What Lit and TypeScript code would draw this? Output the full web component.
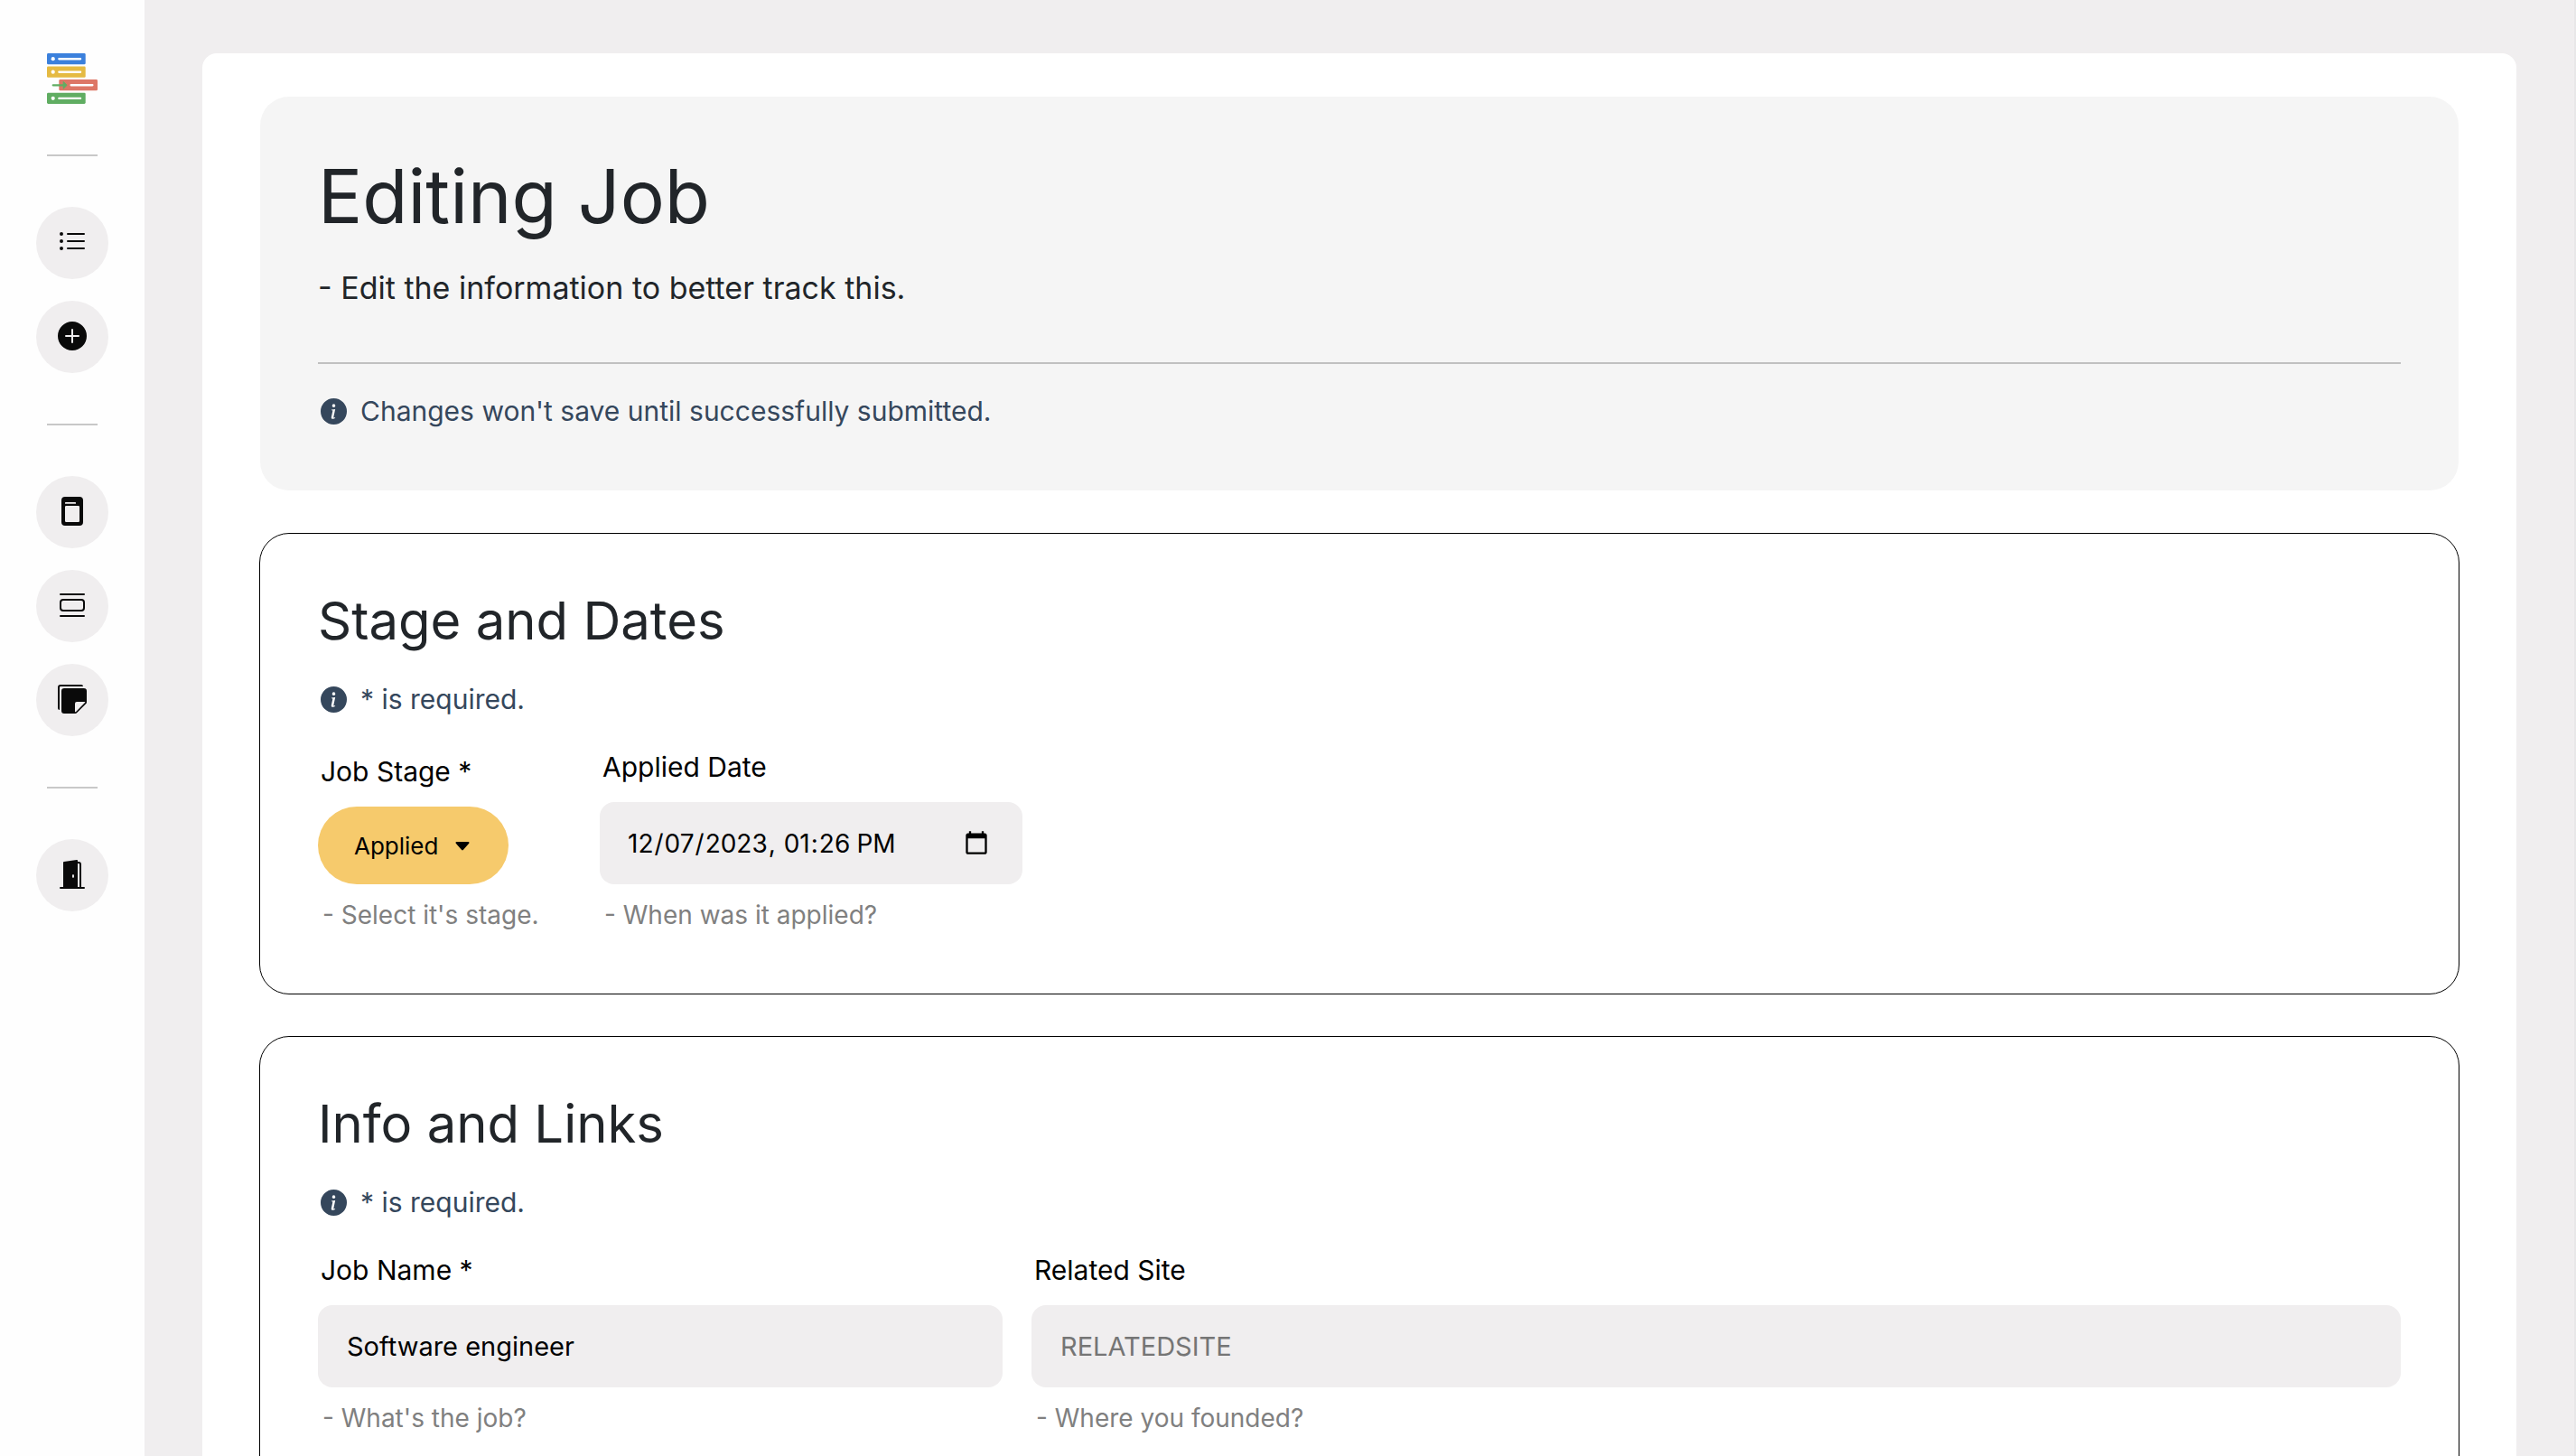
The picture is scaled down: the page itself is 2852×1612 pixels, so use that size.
import { LitElement, html, css, svg } from "lit";
import { customElement, property } from "lit/decorators.js";

const icons = {
  list: svg`<path fill-rule="evenodd" d="M5 11.5a.5.5 0 0 1 .5-.5h9a.5.5 0 0 1 0 1h-9a.5.5 0 0 1-.5-.5m0-4a.5.5 0 0 1 .5-.5h9a.5.5 0 0 1 0 1h-9a.5.5 0 0 1-.5-.5m0-4a.5.5 0 0 1 .5-.5h9a.5.5 0 0 1 0 1h-9a.5.5 0 0 1-.5-.5m-3 1a1 1 0 1 0 0-2 1 1 0 0 0 0 2m0 4a1 1 0 1 0 0-2 1 1 0 0 0 0 2m0 4a1 1 0 1 0 0-2 1 1 0 0 0 0 2"/>`,
  plus: svg`<path d="M16 8A8 8 0 1 1 0 8a8 8 0 0 1 16 0M8.5 4.5a.5.5 0 0 0-1 0v3h-3a.5.5 0 0 0 0 1h3v3a.5.5 0 0 0 1 0v-3h3a.5.5 0 0 0 0-1h-3z"/>`,
  page: svg`<path fill-rule="evenodd" d="M4 0h8a2 2 0 0 1 2 2v12a2 2 0 0 1-2 2H4a2 2 0 0 1-2-2V2a2 2 0 0 1 2-2M4.4 3a.4.4 0 0 0 0 .9h5.2a.4.4 0 0 0 0-.9zM4.6 5a.6.6 0 0 0-.6.6v7.8a.6.6 0 0 0 .6.6h6.8a.6.6 0 0 0 .6-.6V5.6a.6.6 0 0 0-.6-.6z"/>`,
  stack: svg`<path d="M3 4.5h10a2 2 0 0 1 2 2v3a2 2 0 0 1-2 2H3a2 2 0 0 1-2-2v-3a2 2 0 0 1 2-2m0 1a1 1 0 0 0-1 1v3a1 1 0 0 0 1 1h10a1 1 0 0 0 1-1v-3a1 1 0 0 0-1-1zM1 2a.5.5 0 0 1 .5-.5h13a.5.5 0 0 1 0 1h-13A.5.5 0 0 1 1 2m0 12a.5.5 0 0 1 .5-.5h13a.5.5 0 0 1 0 1h-13A.5.5 0 0 1 1 14"/>`,
  notes: svg`<path d="M0 1.5V13a1 1 0 0 0 1 1V1.5a.5.5 0 0 1 .5-.5H14a1 1 0 0 0-1-1H1.5A1.5 1.5 0 0 0 0 1.5"/><path d="M3.5 2A1.5 1.5 0 0 0 2 3.5v11A1.5 1.5 0 0 0 3.5 16h6.086a1.5 1.5 0 0 0 1.06-.44l4.915-4.914A1.5 1.5 0 0 0 16 9.586V3.5A1.5 1.5 0 0 0 14.5 2zm6 8.5a1 1 0 0 1 1-1h4.396a.25.25 0 0 1 .177.427l-5.146 5.146a.25.25 0 0 1-.427-.177z"/>`,
  door: svg`<path d="M1.5 15a.5.5 0 0 0 0 1h13a.5.5 0 0 0 0-1H13V2.5A1.5 1.5 0 0 0 11.5 1H11V.5a.5.5 0 0 0-.57-.495l-7 1A.5.5 0 0 0 3 1.5V15zM11 2h.5a.5.5 0 0 1 .5.5V15h-1zm-2.5 8c-.276 0-.5-.448-.5-1s.224-1 .5-1 .5.448.5 1-.224 1-.5 1"/>`,
  info: svg`<path d="M8 16A8 8 0 1 0 8 0a8 8 0 0 0 0 16m.93-9.412-1 4.705c-.07.34.029.533.304.533.194 0 .487-.07.686-.246l-.088.416c-.287.346-.92.598-1.465.598-.703 0-1.002-.422-.808-1.319l.738-3.468c.064-.293.006-.399-.287-.47l-.451-.081.082-.381 2.29-.287zM8 5.5a1 1 0 1 1 0-2 1 1 0 0 1 0 2"/>`,
};

type IconName = keyof typeof icons;

const navGroups: { icon: IconName; label: string }[][] = [
  [
    { icon: "list", label: "Job list" },
    { icon: "plus", label: "Add job" },
  ],
  [
    { icon: "page", label: "Pages" },
    { icon: "stack", label: "Stages" },
    { icon: "notes", label: "Notes" },
  ],
  [{ icon: "door", label: "Sign out" }],
];

@customElement("side-nav")
export class SideNav extends LitElement {
  static styles = css`
    :host {
      display: block;
      background: #fefefe;
    }
    nav {
      display: flex;
      flex-direction: column;
      align-items: center;
      gap: 56px;
      padding: 59px 40px;
    }
    .logo {
      display: block;
      height: 56px;
    }
    .logo svg {
      display: block;
      width: 56px;
      height: 56px;
    }
    .rule {
      width: 56px;
      height: 2px;
      margin: 0;
      border: 0;
      background: #c8c8c8;
    }
    .group {
      display: flex;
      flex-direction: column;
      gap: 24px;
    }
    button {
      display: flex;
      align-items: center;
      justify-content: center;
      width: 80px;
      height: 80px;
      padding: 0 0 2px;
      border: 0;
      border-radius: 50%;
      background: #f0eeef;
      color: #0a0a0a;
      cursor: pointer;
    }
    button svg {
      width: 32px;
      height: 32px;
      fill: currentColor;
    }
  `;

  private bar(x: number, y: number, color: string, dot: boolean) {
    return svg`
      <rect x=${x} y=${y} width="42.7" height="12.2" rx="1.4" fill=${color}/>
      ${dot ? svg`<circle cx=${x + 6.7} cy=${y + 6.1} r="2.1" fill="#fff"/>` : ""}
      <rect x=${x + 12.2} y=${y + 5} width="26" height="2.3" rx="1.1" fill="#fff"/>`;
  }

  render() {
    return html`
      <nav aria-label="Main">
        <a class="logo" href="#" aria-label="Home">
          <svg viewBox="0 0 56 56" aria-hidden="true">
            ${this.bar(0, 0.1, "#3b80dc", true)}
            ${this.bar(0, 14.6, "#e5ba42", true)}
            ${this.bar(13.3, 29.1, "#dd7766", false)}
            ${this.bar(0, 43.7, "#60ad62", true)}
            <path d="M6.7 35.3H19" stroke="#60ad62" stroke-width="2.2" stroke-linecap="round"/>
            <path d="M18.2 31.4v7.8l3.9-3.9z" fill="#60ad62" stroke="#60ad62" stroke-width="1" stroke-linejoin="round"/>
          </svg>
        </a>
        ${navGroups.map(
          (group) => html`
            <hr class="rule" />
            <div class="group">
              ${group.map(
                (item) => html`<button type="button" aria-label=${item.label}>
                  <svg viewBox="0 0 16 16" aria-hidden="true">${icons[item.icon]}</svg>
                </button>`
              )}
            </div>
          `
        )}
      </nav>
    `;
  }
}

@customElement("info-note")
export class InfoNote extends LitElement {
  @property() text = "";

  static styles = css`
    :host {
      display: flex;
      align-items: center;
      gap: 15px;
      padding: 8px 0 8px 3px;
      color: #35475c;
      font-size: 30px;
      line-height: 32px;
    }
    svg {
      flex: none;
      width: 29px;
      height: 29px;
      fill: currentColor;
    }
  `;

  render() {
    return html`<svg viewBox="0 0 16 16" aria-hidden="true">${icons.info}</svg><span>${this.text}</span>`;
  }
}

@customElement("app-root")
export class AppRoot extends LitElement {
  static styles = css`
    :host {
      display: grid;
      grid-template-columns: auto minmax(0, 1fr);
      box-sizing: border-box;
      height: 100vh;
      overflow: hidden;
      border-right: 2px solid #e8e7e8;
      background: #f0eeef;
      color: #000;
      font-family: Inter, "Open Sans", sans-serif;
    }
    * {
      box-sizing: border-box;
    }
    main {
      display: flex;
      flex-direction: column;
      gap: 48px;
      margin: 59px 64px 0;
      padding: 48px 64px;
      border-radius: 16px;
      background: #fff;
    }
    .intro,
    .card {
      padding: 64px;
      border-radius: 32px;
    }
    .intro {
      background: #f5f5f5;
    }
    .card {
      outline: 1px solid #000;
    }
    h1,
    h2,
    p {
      margin: 0;
      color: #212529;
      font-weight: 400;
    }
    h1 {
      font-size: 82px;
      line-height: 94px;
    }
    h2 {
      margin-bottom: 30px;
      font-size: 58px;
      line-height: 65px;
    }
    .lead {
      margin-top: 30px;
      font-size: 34px;
      line-height: 48px;
    }
    .line {
      height: 2px;
      margin: 58px 0 28px;
      border: 0;
      background: #c0c0c0;
    }
    .row {
      display: flex;
      align-items: flex-end;
      gap: 64px;
      margin-top: 32px;
    }
    .split {
      display: grid;
      grid-template-columns: 1fr 2fr;
      gap: 32px;
      margin-top: 32px;
    }
    .field {
      display: flex;
      flex-direction: column;
      align-items: flex-start;
      min-width: 248px;
    }
    label {
      margin-bottom: 20px;
      padding-left: 3px;
      font-size: 30px;
      line-height: 38px;
    }
    .hint {
      padding: 12px 0 0 5px;
      color: #808080;
      font-size: 28px;
      line-height: 45px;
    }
    input {
      width: 100%;
      height: 91px;
      padding: 0 32px;
      border: 0;
      border-radius: 16px;
      background: #f0eeef;
      color: #000;
      font: inherit;
      font-size: 29px;
    }
    input::placeholder {
      color: #757575;
      opacity: 1;
    }
    .date {
      width: 468px;
      padding: 0 34px 0 30px;
      font-size: 28px;
    }
    .date::-webkit-calendar-picker-indicator {
      width: 30px;
      height: 30px;
      padding: 2px;
    }
    .pick {
      position: relative;
    }
    select {
      display: block;
      width: 211px;
      height: 86px;
      padding: 0 40px;
      border: 0;
      border-radius: 43px;
      appearance: none;
      background: #f6ca6c;
      color: #000;
      font: inherit;
      font-size: 26px;
    }
    .caret {
      position: absolute;
      right: 42px;
      top: 38px;
      width: 18px;
      height: 12px;
      pointer-events: none;
    }
  `;

  render() {
    return html`
      <side-nav></side-nav>
      <main>
        <header class="intro">
          <h1>Editing Job</h1>
          <p class="lead">- Edit the information to better track this.</p>
          <hr class="line" />
          <info-note text="Changes won't save until successfully submitted."></info-note>
        </header>

        <section class="card">
          <h2>Stage and Dates</h2>
          <info-note text="* is required."></info-note>
          <div class="row">
            <div class="field">
              <label for="stage">Job Stage *</label>
              <div class="pick">
                <select id="stage" required aria-describedby="stage-hint">
                  <option selected>Applied</option>
                </select>
                <svg class="caret" viewBox="0 0 18 12" aria-hidden="true">
                  <path d="M2.6 1h12.8a1 1 0 0 1 .8 1.7l-6.4 7.4a1.1 1.1 0 0 1-1.6 0L1.8 2.7A1 1 0 0 1 2.6 1z" />
                </svg>
              </div>
              <span class="hint" id="stage-hint">- Select it's stage.</span>
            </div>
            <div class="field">
              <label for="applied">Applied Date</label>
              <input class="date" id="applied" type="datetime-local" value="2023-12-07T13:26" aria-describedby="applied-hint" />
              <span class="hint" id="applied-hint">- When was it applied?</span>
            </div>
          </div>
        </section>

        <section class="card">
          <h2>Info and Links</h2>
          <info-note text="* is required."></info-note>
          <div class="split">
            <div class="field">
              <label for="name">Job Name *</label>
              <input id="name" type="text" value="Software engineer" required aria-describedby="name-hint" />
              <span class="hint" id="name-hint">- What's the job?</span>
            </div>
            <div class="field">
              <label for="site">Related Site</label>
              <input id="site" type="text" placeholder="RELATEDSITE" aria-describedby="site-hint" />
              <span class="hint" id="site-hint">- Where you founded?</span>
            </div>
          </div>
        </section>
      </main>
    `;
  }
}
